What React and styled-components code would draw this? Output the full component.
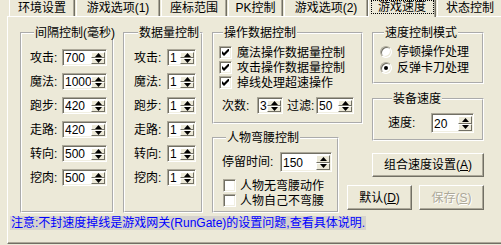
import React from "react";
import styled, { createGlobalStyle } from "styled-components";

const FONT = `"Liberation Sans", "Noto Sans CJK SC", sans-serif`;

const GlobalStyle = createGlobalStyle`
  html, body { margin: 0; padding: 0; background: #ECE9D8; }
  body { font-family: ${FONT}; font-size: 12px; color: #000; }
  * { box-sizing: border-box; }
`;

const Window = styled.div`
  width: 501px;
  height: 245px;
  overflow: hidden;
  background: #ECE9D8;
  font-family: ${FONT};
  font-size: 12px;
  line-height: 14px;
`;

const TabBar = styled.div`
  display: flex;
  height: 16px;
  padding-left: 9px;
  position: relative;
  z-index: 1;
`;

const Tab = styled.div`
  flex: none;
  width: ${(p) => p.$w}px;
  height: ${(p) => (p.$active ? 17 : 16)}px;
  margin-right: 1px;
  margin-left: ${(p) => (p.$active ? -1 : 0)}px;
  border-left: 1px solid #fff;
  border-right: 1px solid #716f64;
  box-shadow: inset -1px 0 #aca899;
  background: #ece9d8;
  display: flex;
  justify-content: center;
  padding-top: ${(p) => (p.$active ? 0 : 1)}px;
  white-space: nowrap;
`;

const TabText = styled.span`
  display: flex;
  justify-content: center;
  align-items: center;
  height: 14px;
  width: ${(p) => (p.$focus ? "calc(100% - 3px)" : "auto")};
  border: ${(p) => (p.$focus ? "1px dotted #000" : "none")};
`;

const Panel = styled.div`
  margin-left: 7px;
  width: 520px;
  height: 228px;
  border-top: 1px solid #fff;
  border-left: 1px solid #fff;
  border-bottom: 1px solid #716f64;
  box-shadow: inset 0 -1px #aca899;
  padding: 10px 0 0 2px;
  display: flex;
  flex-direction: column;
`;

const MainRow = styled.div`
  display: flex;
  gap: 9px;
  padding-left: 10px;
`;

const Column = styled.div`
  display: flex;
  flex-direction: column;
  width: ${(p) => p.$w}px;
  flex: none;
`;

const Group = styled.fieldset`
  margin: 0;
  margin-top: ${(p) => p.$mt || 0}px;
  padding: ${(p) => p.$pad || "0"};
  min-width: 0;
  width: ${(p) => p.$w || "100%"};
  height: ${(p) => p.$h}px;
  border: 2px groove #fff;
  display: flex;
  flex-direction: column;
`;

const Legend = styled.legend`
  margin-left: 4px;
  padding: 0 1px;
  font-size: 12px;
  line-height: 12px;
  white-space: nowrap;
`;

const FieldRow = styled.div`
  display: flex;
  align-items: center;
  height: ${(p) => p.$h || 17}px;
  margin-bottom: ${(p) => p.$mb || 0}px;
  margin-top: ${(p) => p.$mt || 0}px;
  padding-left: ${(p) => p.$pl || 0}px;
`;

const Label = styled.span`
  flex: none;
  width: ${(p) => p.$w}px;
  margin-left: ${(p) => p.$ml || 0}px;
  white-space: nowrap;
`;

const SpinBox = styled.div`
  flex: none;
  display: flex;
  align-items: stretch;
  width: ${(p) => p.$w}px;
  height: ${(p) => p.$h || 17}px;
  background: #fff;
  border: 1px solid;
  border-color: #aca899 #fff #fff #aca899;
  box-shadow: inset 1px 1px #716f64, inset -1px -1px #f1efe2;
  padding: 2px 1px 1px 2px;
`;

const SpinValue = styled.span`
  flex: 1;
  min-width: 0;
  overflow: hidden;
  white-space: nowrap;
  display: flex;
  align-items: center;
  line-height: 12px;
`;

const SpinButtons = styled.div`
  flex: none;
  width: 14px;
  display: flex;
  flex-direction: column;
`;

const SpinHalf = styled.div`
  flex: 1;
  background: #ece9d8;
  border: 1px solid;
  border-color: #fff #716f64 #716f64 #fff;
  display: flex;
  align-items: center;
  justify-content: center;
`;

const Arrow = ({ down }) => (
  <svg width="7" height="4" viewBox="0 0 7 4">
    {down ? <polygon points="0,0 7,0 3.5,4" fill="#000" /> : <polygon points="3.5,0 7,4 0,4" fill="#000" />}
  </svg>
);

const Spin = ({ value, w, h }) => (
  <SpinBox $w={w} $h={h}>
    <SpinValue>{value}</SpinValue>
    <SpinButtons>
      <SpinHalf>
        <Arrow />
      </SpinHalf>
      <SpinHalf>
        <Arrow down />
      </SpinHalf>
    </SpinButtons>
  </SpinBox>
);

const CheckRow = styled.div`
  display: flex;
  align-items: center;
  height: 15px;
  gap: ${(p) => p.$gap || 5}px;
  padding-left: ${(p) => p.$pl || 0}px;
  margin-top: ${(p) => p.$mt || 0}px;
  white-space: nowrap;
`;

const CheckBox = styled.span`
  flex: none;
  width: 13px;
  height: 13px;
  background: #fff;
  border: 1px solid;
  border-color: #aca899 #fff #fff #aca899;
  box-shadow: inset 1px 1px #716f64, inset -1px -1px #f1efe2;
  display: flex;
  align-items: center;
  justify-content: center;
`;

const Check = ({ checked }) => (
  <CheckBox>
    {checked && (
      <svg width="7" height="7" viewBox="0 0 7 7">
        <polygon points="0,2 2,4 6,0 7,0 7,2 2,7 0,5" fill="#000" />
      </svg>
    )}
  </CheckBox>
);

const RadioCircle = styled.span`
  flex: none;
  width: 12px;
  height: 12px;
  border-radius: 50%;
  background: #fff;
  border: 1px solid;
  border-color: #aca899 #fff #fff #aca899;
  box-shadow: inset 1px 1px #716f64, inset -1px -1px #ece9d8;
  display: flex;
  align-items: center;
  justify-content: center;
  &::after {
    content: "";
    width: 4px;
    height: 4px;
    border-radius: 50%;
    background: ${(p) => (p.$on ? "#000" : "transparent")};
  }
`;

const RadioRow = styled.div`
  display: flex;
  align-items: center;
  height: 16px;
  gap: 5px;
  white-space: nowrap;
`;

const Button = styled.div`
  flex: none;
  width: ${(p) => p.$w}px;
  height: ${(p) => p.$h}px;
  margin-top: ${(p) => p.$mt || 0}px;
  background: #ece9d8;
  border: 1px solid;
  border-color: #fff #716f64 #716f64 #fff;
  box-shadow: inset -1px -1px #aca899;
  display: flex;
  align-items: center;
  justify-content: center;
  white-space: nowrap;
  color: ${(p) => (p.$disabled ? "#aca899" : "#000")};
  text-shadow: ${(p) => (p.$disabled ? "1px 1px #fff" : "none")};
`;

const ButtonRow = styled.div`
  display: flex;
  gap: 7px;
  margin-top: 8px;
  margin-left: -25px;
`;

const Note = styled.div`
  align-self: flex-start;
  margin-top: 3px;
  padding: 0 1px;
  height: 14px;
  background: #d6d3ce;
  color: #0000ff;
  white-space: nowrap;
`;

const tabs = [
  { label: "环境设置", w: 66 },
  { label: "游戏选项(1)", w: 84 },
  { label: "座标范围", w: 66 },
  { label: "PK控制", w: 55 },
  { label: "游戏选项(2)", w: 84 },
  { label: "游戏速度", w: 68, active: true },
  { label: "状态控制", w: 66 },
];

const intervals = [
  ["攻击:", "700"],
  ["魔法:", "1000"],
  ["跑步:", "420"],
  ["走路:", "420"],
  ["转向:", "500"],
  ["挖肉:", "500"],
];

const amounts = ["攻击:", "魔法:", "跑步:", "走路:", "转向:", "挖肉:"];

export default function App() {
  return (
    <Window>
      <GlobalStyle />
      <TabBar>
        {tabs.map((t) => (
          <Tab key={t.label} $w={t.w} $active={t.active}>
            <TabText $focus={t.active}>{t.label}</TabText>
          </Tab>
        ))}
      </TabBar>
      <Panel>
        <MainRow>
          <Column $w={94}>
            <Group $h={186} $pad="10px 0 0 8px">
              <Legend>间隔控制(毫秒)</Legend>
              {intervals.map(([l, v]) => (
                <FieldRow key={l} $mb={7}>
                  <Label $w={32}>{l}</Label>
                  <Spin value={v} w={45} />
                </FieldRow>
              ))}
            </Group>
          </Column>
          <Column $w={80}>
            <Group $h={186} $pad="10px 0 0 9px">
              <Legend>数据量控制</Legend>
              {amounts.map((l) => (
                <FieldRow key={l} $mb={7}>
                  <Label $w={33}>{l}</Label>
                  <Spin value="1" w={29} />
                </FieldRow>
              ))}
            </Group>
          </Column>
          <Column $w={151}>
            <Group $h={97} $pad="6px 0 0 5px">
              <Legend>操作数据控制</Legend>
              <CheckRow>
                <Check checked />
                魔法操作数据量控制
              </CheckRow>
              <CheckRow>
                <Check checked />
                攻击操作数据量控制
              </CheckRow>
              <CheckRow>
                <Check checked />
                掉线处理超速操作
              </CheckRow>
              <FieldRow $mt={7} $pl={3}>
                <Label $w={35}>次数:</Label>
                <Spin value="3" w={26} />
                <Label $w={29} $ml={4}>过滤:</Label>
                <Spin value="50" w={38} />
              </FieldRow>
            </Group>
            <Group $h={81} $mt={8} $w="127px" $pad="8px 0 0 8px">
              <Legend>人物弯腰控制</Legend>
              <FieldRow $h={20}>
                <Label $w={58}>停留时间:</Label>
                <Spin value="150" w={52} h={20} />
              </FieldRow>
              <CheckRow $pl={1} $gap={4} $mt={6}>
                <Check />
                人物无弯腰动作
              </CheckRow>
              <CheckRow $pl={1} $gap={4}>
                <Check />
                人物自己不弯腰
              </CheckRow>
            </Group>
          </Column>
          <Column $w={112}>
            <Group $h={57} $pad="5px 0 0 6px">
              <Legend>速度控制模式</Legend>
              <RadioRow>
                <RadioCircle />
                停顿操作处理
              </RadioRow>
              <RadioRow>
                <RadioCircle $on />
                反弹卡刀处理
              </RadioRow>
            </Group>
            <Group $h={48} $mt={9} $pad="8px 0 0 14px">
              <Legend>装备速度</Legend>
              <FieldRow $h={20}>
                <Label $w={43}>速度:</Label>
                <Spin value="20" w={43} h={20} />
              </FieldRow>
            </Group>
            <Button $w={112} $h={24} $mt={12}>
              组合速度设置(<u>A</u>)
            </Button>
            <ButtonRow>
              <Button $w={65} $h={25}>
                默认(<u>D</u>)
              </Button>
              <Button $w={65} $h={25} $disabled>
                保存(<u>S</u>)
              </Button>
            </ButtonRow>
          </Column>
        </MainRow>
        <Note>注意:不封速度掉线是游戏网关(RunGate)的设置问题,查看具体说明.</Note>
      </Panel>
    </Window>
  );
}
